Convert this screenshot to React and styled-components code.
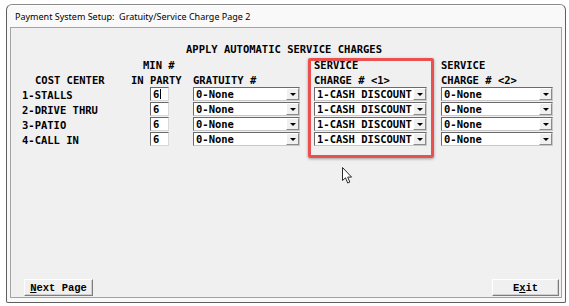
import React from 'react';
import styled, { createGlobalStyle } from 'styled-components';

const GlobalStyle = createGlobalStyle`
  html, body {
    margin: 0;
    padding: 0;
    background: #ffffff;
  }
`;

const MONO = `'DejaVu Sans Mono', 'Liberation Mono', monospace`;

const Window = styled.div`
  box-sizing: border-box;
  display: flex;
  flex-direction: column;

  width: 560px;
  height: 299px;
  margin: 4px 0 0 6px;
  padding: 0 3px 4px 3px;

  background: #f9f9f9;
  border: 1px solid #5f5f5f;
  border-top-color: #8a8a8a;
  border-radius: 6px 6px 2px 2px;
  box-shadow: inset 0 1px 0 #ffffff;
`;

const TitleBar = styled.div`
  display: flex;
  align-items: center;

  height: 22px;
  padding-left: 5px;

  font-family: 'Noto Sans', 'Open Sans', sans-serif;
  font-size: 9px;
  color: #000;
  white-space: pre;
`;

const Panel = styled.div`
  position: relative;
  flex: 1;
  display: flex;
  flex-direction: column;

  padding: 14px 2px 1px 0;

  background: #f0f0f0;
  border: 1px solid #a3a3a3;

  font-family: ${MONO};
  font-weight: bold;
  font-size: 10.5px;
  color: #000;
`;

const Heading = styled.div`
  height: 15px;
  line-height: 15px;
  text-align: center;
  padding-right: 2px;
  white-space: pre;
`;

const Grid = styled.div`
  display: grid;
  grid-template-columns: 109px 62px 121px 127px 112px;
  grid-auto-rows: 15px;
  padding-left: 11px;
`;

const Cell = styled.div`
  display: flex;
  align-items: ${(p) => (p.$field ? 'flex-start' : 'center')};
  padding-left: ${(p) => p.$indent || 0}px;
  white-space: pre;
`;

const NumberBox = styled.div`
  box-sizing: border-box;
  width: 19px;
  height: 14px;
  margin-left: 19px;
  padding-left: 2px;

  background: #fff;
  border: 1px solid;
  border-color: #6a6a6a #d8d8d8 #d8d8d8 #6a6a6a;

  line-height: 12px;
`;

const Caret = styled.span`
  display: inline-block;
  width: 1px;
  height: 10px;
  margin-left: 1px;
  vertical-align: -1px;
  background: #000;
`;

const SelectBox = styled.div`
  box-sizing: border-box;
  display: flex;

  width: ${(p) => p.$width}px;
  height: 14px;

  background: #fff;
  border: 1px solid;
  border-color: #6a6a6a #c8c8c8 #c8c8c8 #6a6a6a;
`;

const SelectText = styled.div`
  flex: 1;
  padding-left: 2px;
  line-height: 12px;
  overflow: hidden;
  white-space: pre;
`;

const ArrowButton = styled.div`
  box-sizing: border-box;
  display: flex;
  align-items: center;
  justify-content: center;

  width: 13px;
  height: 12px;

  background: #f0f0f0;
  border: 1px solid;
  border-color: #ffffff #8a8a8a #8a8a8a #ffffff;

  &::after {
    content: '';
    border-left: 3px solid transparent;
    border-right: 3px solid transparent;
    border-top: 3px solid #000;
    margin-top: 1px;
  }
`;

const Spacer = styled.div`
  flex: 1;
`;

const ButtonBar = styled.div`
  display: flex;
  justify-content: space-between;
  padding-left: 13px;
`;

const Button = styled.button`
  box-sizing: border-box;
  width: ${(p) => p.$width}px;
  height: 17px;
  padding: 0;

  background: #f0f0f0;
  border: 1px solid;
  border-color: #ffffff #7d7d7d #7d7d7d #ffffff;
  box-shadow: inset -1px -1px 0 #cfcfcf;

  font-family: 'Liberation Mono', monospace;
  font-weight: bold;
  font-size: 10.5px;
  color: #000;
  white-space: pre;

  u {
    text-decoration: underline;
    text-underline-offset: 1px;
  }
`;

const Highlight = styled.div`
  position: absolute;
  left: 297px;
  top: 30px;
  width: 126px;
  height: 100px;
  box-sizing: border-box;

  border: 3px solid #e9504f;
  border-radius: 2px;
  box-shadow: 0 1px 3px rgba(0, 0, 0, 0.35);
  pointer-events: none;
`;

const Pointer = styled.svg`
  position: absolute;
  left: 331px;
  top: 139px;
`;

const rows = [
  { name: '1-STALLS', min: '6', caret: true },
  { name: '2-DRIVE THRU', min: '6' },
  { name: '3-PATIO', min: '6' },
  { name: '4-CALL IN', min: '6' },
];

const Select = ({ width, value }) => (
  <SelectBox $width={width}>
    <SelectText>{value}</SelectText>
    <ArrowButton />
  </SelectBox>
);

const App = () => (
  <>
    <GlobalStyle />
    <Window>
      <TitleBar>Payment System Setup:  Gratuity/Service Charge Page 2</TitleBar>
      <Panel>
        <Heading>APPLY AUTOMATIC SERVICE CHARGES</Heading>
        <Grid>
          <Cell />
          <Cell $indent={12}>MIN #</Cell>
          <Cell />
          <Cell>SERVICE</Cell>
          <Cell>SERVICE</Cell>

          <Cell $indent={13}>COST CENTER</Cell>
          <Cell>IN PARTY</Cell>
          <Cell>GRATUITY #</Cell>
          <Cell>CHARGE # &lt;1&gt;</Cell>
          <Cell>CHARGE # &lt;2&gt;</Cell>

          {rows.map((r) => (
            <React.Fragment key={r.name}>
              <Cell>{r.name}</Cell>
              <Cell $field>
                <NumberBox>
                  {r.min}
                  {r.caret && <Caret />}
                </NumberBox>
              </Cell>
              <Cell $field>
                <Select width={107} value="0-None" />
              </Cell>
              <Cell $field>
                <Select width={113} value="1-CASH DISCOUNT" />
              </Cell>
              <Cell $field>
                <Select width={112} value="0-None" />
              </Cell>
            </React.Fragment>
          ))}
        </Grid>
        <Spacer />
        <ButtonBar>
          <Button $width={69}>
            <u>N</u>ext Page
          </Button>
          <Button $width={67}>
            E<u>x</u>it
          </Button>
        </ButtonBar>
        <Highlight />
        <Pointer width="12" height="18" viewBox="0 0 12 18">
          <path
            d="M0.5 0.5 L0.5 13.5 L3.5 10.8 L5.7 16 L7.8 15.1 L5.7 10.1 L9.6 10.1 Z"
            fill="#ffffff"
            stroke="#2a2a2a"
            strokeWidth="1"
            strokeLinejoin="round"
          />
        </Pointer>
      </Panel>
    </Window>
  </>
);

export default App;
